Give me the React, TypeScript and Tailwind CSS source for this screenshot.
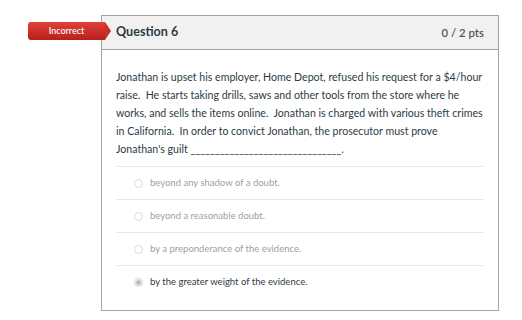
import React from "react";

const answers = [
  { text: "beyond any shadow of a doubt.", selected: false },
  { text: "beyond a reasonable doubt.", selected: false },
  { text: "by a preponderance of the evidence.", selected: false },
  { text: "by the greater weight of the evidence.", selected: true },
];

export default function App() {
  return (
    <div
      className="relative w-[522px] h-[320px] bg-white overflow-hidden"
      style={{ fontFamily: "Lato, 'Open Sans', sans-serif" }}
    >
      <div className="absolute left-[28px] top-[22px] flex items-center">
        <div className="h-[18px] w-[77px] rounded-l-[3px] bg-gradient-to-b from-[#e0403a] to-[#b8201c] text-white text-[9px] font-medium flex items-center justify-center">
          Incorrect
        </div>
        <div className="w-0 h-0 border-y-[9px] border-y-transparent border-l-[6px] border-l-[#c9302b]" />
      </div>
      <div className="ml-[101px] mt-[15px] w-[398px] border border-[#a3a3a3]">
        <div className="h-[34px] bg-[#f1f1f1] border-b border-[#a3a3a3] flex items-center justify-between px-[14px]">
          <span className="text-[12.6px] font-bold text-[#2d3b45]">Question 6</span>
          <span className="text-[11.4px] font-semibold text-[#565656]">0 / 2 pts</span>
        </div>
        <div className="px-[14px] pt-[18px] pb-[12px]">
          <p className="text-[10.6px] leading-[18px] text-[#2d3b45] mb-[8px]">
            Jonathan is upset his employer, Home Depot, refused his request for a $4/hour raise.&nbsp; He starts taking drills, saws and other tools from the store where he works, and sells the items online.&nbsp; Jonathan is charged with various theft crimes in California.&nbsp; In order to convict Jonathan, the prosecutor must prove Jonathan's guilt _______________________________.
          </p>
          {answers.map((a) => (
            <div
              key={a.text}
              className="h-[33px] border-t border-[#e6e6e6] flex items-center pl-[18px]"
            >
              {a.selected ? (
                <span className="w-[9px] h-[9px] rounded-full border border-[#d4d4d4] bg-[#f3f3f3] flex items-center justify-center">
                  <span className="w-[5px] h-[5px] rounded-full bg-[#bdbdbd]" />
                </span>
              ) : (
                <span className="w-[9px] h-[9px] rounded-full border border-[#dcdcdc] bg-white" />
              )}
              <span
                className={
                  "ml-[7px] text-[9.5px] " +
                  (a.selected ? "text-[#2d3b45]" : "text-[#a0a0a0]")
                }
              >
                {a.text}
              </span>
            </div>
          ))}
        </div>
      </div>
    </div>
  );
}
